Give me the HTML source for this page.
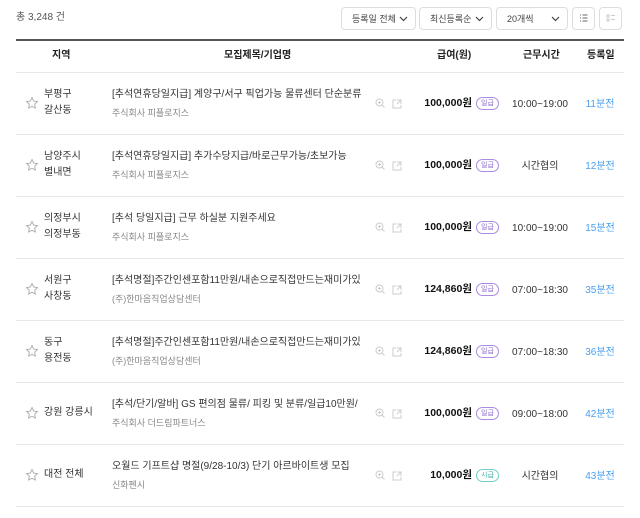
<!DOCTYPE html><html><head><meta charset="utf-8"><style>
*{margin:0;padding:0;box-sizing:border-box}
body{width:640px;height:518px;background:#fff;font-family:"Liberation Sans","Noto Sans CJK KR",sans-serif;color:#333;position:relative;overflow:hidden}
.abs{position:absolute;line-height:14px}
.total{left:16px;top:11px;font-size:10px;color:#555}
.dd{top:7px;height:23px;border:1px solid #ddd;border-radius:4px;font-size:9px;color:#444;padding:4px 0 0 10px}
.dd svg{position:absolute;right:7px;top:8px}
.ib{top:7px;width:23px;height:23px;border:1px solid #ddd;border-radius:4px}
.hl{left:16px;width:608px;top:39px;height:2px;background:#555}
.hd{top:49px;font-size:10px;font-weight:bold;color:#222}
.sep{left:16px;width:608px;height:1px;background:#e8e8e8}
.reg{left:44px;font-size:10px;line-height:16px;color:#333}
.t{left:112px;font-size:10px;color:#333;white-space:nowrap}
.c{left:112px;font-size:9px;color:#888}
.sal{right:168px;font-size:10.5px;font-weight:bold;color:#111}
.bd{left:476px;width:23px;height:13px;border:1px solid #a98be0;border-radius:7px;font-size:7px;color:#8a6ad0;text-align:center;line-height:11px}
.bd.g{border-color:#6fd0c8;color:#3fb0a6}
.tm{left:500px;width:80px;text-align:center;font-size:10px;color:#333}
.dt{left:584px;width:32px;text-align:center;font-size:10px;color:#4a9ff0}
</style></head><body>
<div class="abs total">총 3,248 건</div>
<div class="abs dd" style="left:341px;width:75px">등록일 전체<svg width="9" height="6"><path d="M1 1l3.5 3.5L8 1" stroke="#444" fill="none" stroke-width="1.2"/></svg></div>
<div class="abs dd" style="left:419px;width:73px">최신등록순<svg width="9" height="6"><path d="M1 1l3.5 3.5L8 1" stroke="#444" fill="none" stroke-width="1.2"/></svg></div>
<div class="abs dd" style="left:496px;width:72px">20개씩<svg width="9" height="6"><path d="M1 1l3.5 3.5L8 1" stroke="#444" fill="none" stroke-width="1.2"/></svg></div>
<div class="abs ib" style="left:572px"><svg width="21" height="21"><path d="M7 7h1M7 10h1M7 13h1M9.5 7h5M9.5 10h5M9.5 13h5" stroke="#666"/></svg></div>
<div class="abs ib" style="left:599px"><svg width="21" height="21"><path d="M7 7h2v2h-2zM7 11h2v2h-2zM11 7.5h4M11 11.5h4" stroke="#ccc" fill="none"/></svg></div>
<div class="abs hl"></div>
<div class="abs hd" style="left:52px">지역</div>
<div class="abs hd" style="left:224px">모집제목/기업명</div>
<div class="abs hd" style="left:437px">급여(원)</div>
<div class="abs hd" style="left:523px">근무시간</div>
<div class="abs hd" style="left:587px">등록일</div>
<div class="abs sep" style="top:72px"></div>
<div id="rows"></div>
<script>
var R=[["부평구<br>갈산동","[추석연휴당일지급] 계양구/서구 픽업가능 물류센터 단순분류","주식회사 피플로지스","100,000원","일급","10:00~19:00","11분전"],
["남양주시<br>별내면","[추석연휴당일지급] 추가수당지급/바로근무가능/초보가능","주식회사 피플로지스","100,000원","일급","시간협의","12분전"],
["의정부시<br>의정부동","[추석 당일지급] 근무 하실분 지원주세요","주식회사 피플로지스","100,000원","일급","10:00~19:00","15분전"],
["서원구<br>사창동","[추석명절]주간인센포함11만원/내손으로직접만드는재미가있","(주)한마음직업상담센터","124,860원","일급","07:00~18:30","35분전"],
["동구<br>용전동","[추석명절]주간인센포함11만원/내손으로직접만드는재미가있","(주)한마음직업상담센터","124,860원","일급","07:00~18:30","36분전"],
["강원 강릉시","[추석/단기/알바] GS 편의점 물류/ 피킹 및 분류/일급10만원/","주식회사 더드림파트너스","100,000원","일급","09:00~18:00","42분전"],
["대전 전체","오월드 기프트샵 명절(9/28-10/3) 단기 아르바이트생 모집","신화펜시","10,000원","시급","시간협의","43분전"]];
var h="";
R.forEach(function(r,i){var y=72+i*62,m=y+31;
var two=r[0].indexOf("<br>")>0;
h+='<svg class="abs" style="left:25px;top:'+(m-7)+'px" width="14" height="14"><path d="M7 1.5l1.7 3.6 3.8.5-2.8 2.6.7 3.8L7 10.2 3.6 12l.7-3.8L1.5 5.6l3.8-.5z" fill="none" stroke="#aaa" stroke-width="0.9"/></svg>';
h+='<div class="abs reg" style="top:'+(two?m-16:m-8)+'px">'+r[0]+'</div>';
h+='<div class="abs t" style="top:'+(m-15)+'px">'+r[1]+'</div>';
h+='<div class="abs c" style="top:'+(m+3)+'px">'+r[2]+'</div>';
h+='<svg class="abs" style="left:375px;top:'+(m-5)+'px" width="30" height="11"><circle cx="4.5" cy="4.5" r="3.5" fill="none" stroke="#ccc"/><path d="M7 7l2.5 2.5M3 4.5h3M4.5 3v3" stroke="#ccc"/><path d="M21 2h-3v8h8v-3M22 2h4v4M26 2l-4 4" fill="none" stroke="#ccc"/></svg>';
h+='<div class="abs sal" style="top:'+(m-7)+'px">'+r[3]+'</div>';
h+='<div class="abs bd'+(r[4]=="시급"?" g":"")+'" style="top:'+(m-6)+'px">'+r[4]+'</div>';
h+='<div class="abs tm" style="top:'+(m-5)+'px">'+r[5]+'</div>';
h+='<div class="abs dt" style="top:'+(m-5)+'px">'+r[6]+'</div>';
h+='<div class="abs sep" style="top:'+(y+62)+'px"></div>';});
document.getElementById("rows").innerHTML=h;
</script>
</body></html>
